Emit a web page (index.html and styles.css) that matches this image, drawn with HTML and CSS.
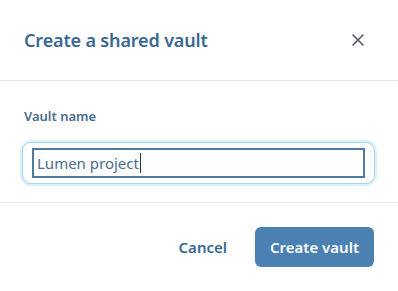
FILE: index.html
```html
<!DOCTYPE html>
<html>
<head>
<meta charset="utf-8">
<link rel="stylesheet" href="styles.css">
</head>
<body>
<div class="dialog">
  <div class="header">
    <h1 class="title">Create a shared vault</h1>
    <button class="close" aria-label="Close">
      <svg width="12" height="12" viewBox="0 0 12 12"><path d="M1 1L11 11M11 1L1 11" stroke="#4b5563" stroke-width="1.5" stroke-linecap="round"/></svg>
    </button>
  </div>
  <div class="body">
    <label class="label">Vault name</label>
    <div class="field">
      <div class="input">Lumen project<span class="caret"></span></div>
    </div>
  </div>
  <div class="footer">
    <button class="cancel">Cancel</button>
    <button class="primary">Create vault</button>
  </div>
</div>
</body>
</html>
```
FILE: styles.css
```css
html, body { margin: 0; padding: 0; background: #fff; }
body { font-family: "Noto Sans", "Open Sans", sans-serif; width: 398px; height: 291px; overflow: hidden; }
.dialog { display: flex; flex-direction: column; }
.header { height: 81px; box-sizing: border-box; border-bottom: 1px solid #e4e7ea; display: flex; align-items: center; justify-content: space-between; padding: 0 34px 0 24px; }
.title { margin: 0; font-size: 18px; font-weight: 600; color: #3b6892; letter-spacing: -0.15px; }
.close { border: 0; background: none; padding: 0; width: 12px; height: 12px; display: flex; }
.body { height: 122px; box-sizing: border-box; border-bottom: 1px solid #e4e7ea; padding: 26px 23px 0 22px; }
.label { display: block; font-size: 13px; font-weight: 600; color: #4a6d8f; margin: 0 0 0 2px; line-height: 18px; }
.field { margin-top: 17px; border: 1px solid #a9d5ee; border-radius: 9px; box-shadow: 0 0 0 2px #dcf0fa; height: 42px; box-sizing: border-box; padding: 5px 9px; background: #fff; }
.input { height: 30px; box-sizing: border-box; border: 2px solid #4f7ba0; font-size: 15px; color: #4a6d8f; padding: 0 3px; line-height: 26px; display: flex; align-items: center; }
.caret { display: inline-block; width: 1px; height: 20px; background: #333; margin-left: 1px; }
.footer { display: flex; justify-content: flex-end; align-items: center; padding: 24px 24px 0 0; gap: 28px; }
.cancel { border: 0; background: none; font-family: inherit; font-size: 15px; font-weight: 600; color: #3b6892; padding: 0; }
.primary { border: 0; background: #4a80b2; color: #fff; font-family: inherit; font-size: 15px; font-weight: 600; height: 40px; width: 119px; border-radius: 6px; padding: 0; }
```
